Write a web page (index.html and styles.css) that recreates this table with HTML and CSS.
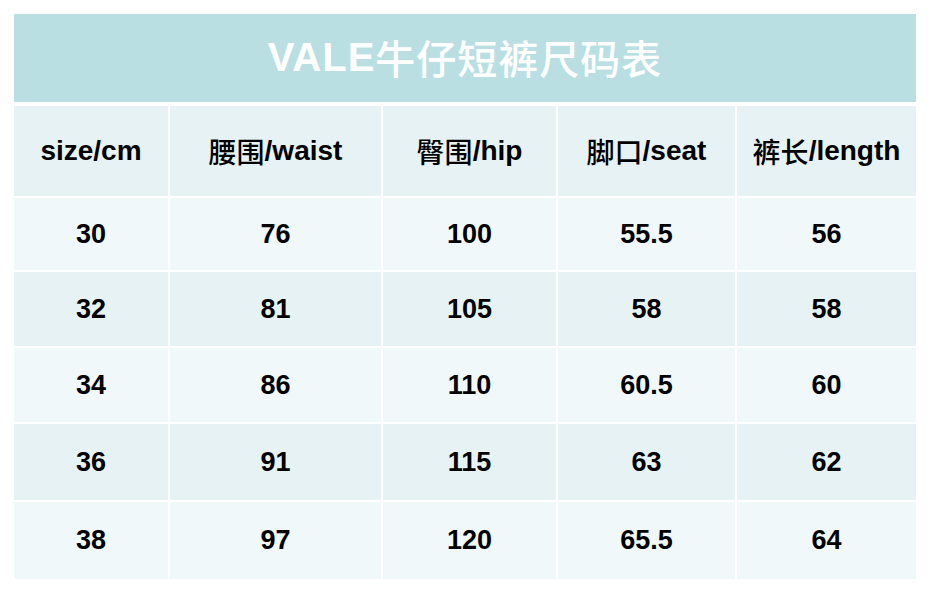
FILE: index.html
```html
<!DOCTYPE html>
<html lang="zh">
<head>
<meta charset="utf-8">
<title>VALE牛仔短裤尺码表</title>
<link rel="stylesheet" href="styles.css">
</head>
<body>
<div class="chart">
  <div class="title">VALE<span class="cn">牛仔短裤尺码表</span></div>
  <div class="grid">
    <div class="cell head">size/cm</div>
    <div class="cell head"><span class="cn">腰围</span>/waist</div>
    <div class="cell head"><span class="cn">臀围</span>/hip</div>
    <div class="cell head"><span class="cn">脚口</span>/seat</div>
    <div class="cell head"><span class="cn">裤长</span>/length</div>

    <div class="cell r1">30</div><div class="cell r1">76</div><div class="cell r1">100</div><div class="cell r1">55.5</div><div class="cell r1">56</div>
    <div class="cell r2">32</div><div class="cell r2">81</div><div class="cell r2">105</div><div class="cell r2">58</div><div class="cell r2">58</div>
    <div class="cell r1">34</div><div class="cell r1">86</div><div class="cell r1">110</div><div class="cell r1">60.5</div><div class="cell r1">60</div>
    <div class="cell r2">36</div><div class="cell r2">91</div><div class="cell r2">115</div><div class="cell r2">63</div><div class="cell r2">62</div>
    <div class="cell r1">38</div><div class="cell r1">97</div><div class="cell r1">120</div><div class="cell r1">65.5</div><div class="cell r1">64</div>
  </div>
</div>
</body>
</html>
```
FILE: styles.css
```css
html, body {
  margin: 0;
  padding: 0;
  background: #ffffff;
}
body {
  padding: 14px;
  font-family: "Liberation Sans", Arial, "Noto Sans CJK SC", sans-serif;
}
.chart {
  width: 902px;
  display: flex;
  flex-direction: column;
  gap: 4px;
}
.title {
  height: 88px;
  background: #b9dfe3;
  color: #ffffff;
  font-weight: bold;
  font-size: 40px;
  letter-spacing: 1px;
  display: flex;
  align-items: center;
  justify-content: center;
  padding-bottom: 2px;
  box-sizing: border-box;
}
.title .cn {
  font-family: "Noto Sans CJK SC", sans-serif;
  font-weight: 500;
  font-size: 40px;
}
.grid {
  display: grid;
  grid-template-columns: 154px 211px 173px 177px 179px;
  grid-template-rows: 90px 72px 74px 74px 76px 77px;
  gap: 2px;
}
.cell {
  display: flex;
  align-items: center;
  justify-content: center;
  font-weight: bold;
  font-size: 27px;
  color: #000000;
}
.head {
  background: #e7f2f4;
  font-size: 28px;
}
.head .cn {
  font-family: "Noto Sans CJK SC", sans-serif;
  font-weight: 500;
  font-size: 28px;
}
.r1 {
  background: #f1f8fa;
}
.r2 {
  background: #e7f2f4;
}
```
